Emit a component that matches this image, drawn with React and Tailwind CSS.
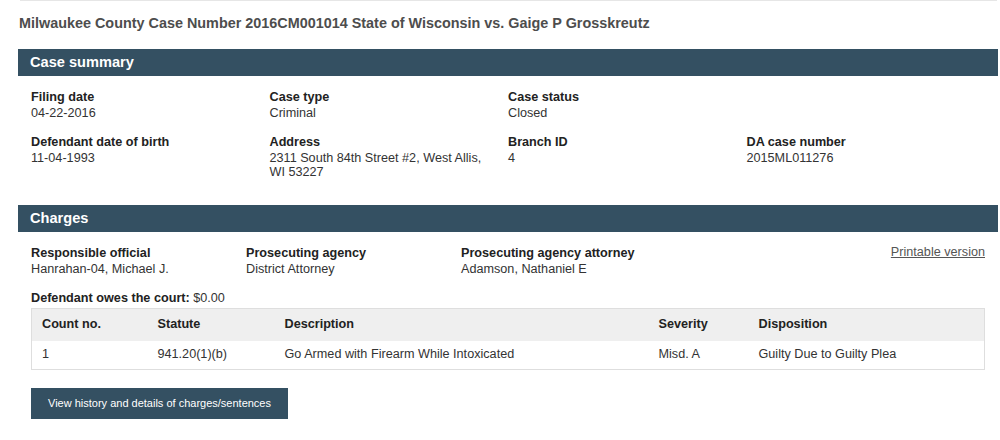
import React from "react";

const summaryRows = [
  [
    { label: "Filing date", value: "04-22-2016" },
    { label: "Case type", value: "Criminal" },
    { label: "Case status", value: "Closed" },
    null,
  ],
  [
    { label: "Defendant date of birth", value: "11-04-1993" },
    { label: "Address", value: ["2311 South 84th Street #2, West Allis,", "WI 53227"] },
    { label: "Branch ID", value: "4" },
    { label: "DA case number", value: "2015ML011276" },
  ],
];

const officials = [
  { label: "Responsible official", value: "Hanrahan-04, Michael J." },
  { label: "Prosecuting agency", value: "District Attorney" },
  { label: "Prosecuting agency attorney", value: "Adamson, Nathaniel E" },
];

const charges = [
  { count: "1", statute: "941.20(1)(b)", description: "Go Armed with Firearm While Intoxicated", severity: "Misd. A", disposition: "Guilty Due to Guilty Plea" },
];

function SectionBar({ title }) {
  return (
    <div className="h-[27px] bg-[#345062] flex items-center px-[12px]">
      <h2 className="text-white font-bold text-[14.6px] leading-none">{title}</h2>
    </div>
  );
}

function Field({ label, value }) {
  return (
    <div>
      <p className="font-bold text-[#222] leading-[14px] mb-[2px]">{label}</p>
      {Array.isArray(value) ? (
        value.map((line, i) => <p key={i} className="leading-[14px]">{line}</p>)
      ) : (
        <p className="leading-[14px]">{value}</p>
      )}
    </div>
  );
}

export default function App() {
  return (
    <div className="bg-white w-[1000px] h-[440px] overflow-hidden text-[12.65px] text-[#333] font-['Liberation_Sans',Arial,sans-serif]">
      <div className="pl-[18px] pr-[2px]">
        <div className="ml-[2px] mr-[1px] border-t border-[#e6e6e6]" />
        <h1 className="pt-[13px] pl-[1px] text-[14.4px] font-bold text-[#4d4d4d] leading-[18px] h-[48px]">
          Milwaukee County Case Number 2016CM001014 State of Wisconsin vs. Gaige P Grosskreutz
        </h1>

        {/* Case summary */}
        <SectionBar title="Case summary" />
        <div className="px-[13px] pt-[14px] pb-[26px] flex flex-col gap-[15px]">
          {summaryRows.map((row, r) => (
            <div key={r} className="grid grid-cols-4">
              {row.map((f, i) => (f ? <Field key={i} {...f} /> : <div key={i} />))}
            </div>
          ))}
        </div>

        {/* Charges */}
        <SectionBar title="Charges" />
        <div className="px-[13px] pt-[14px]">
          <div className="flex items-start">
            <div className="grid grid-cols-[215px_215px_1fr] flex-1">
              {officials.map((f, i) => <Field key={i} {...f} />)}
            </div>
            <a href="#" className="text-[#555] underline leading-[14px] -mt-[1px]">Printable version</a>
          </div>
          <p className="mt-[15px] leading-[14px]">
            <span className="font-bold text-[#222]">Defendant owes the court:</span> $0.00
          </p>
          <table className="mt-[3px] w-full border border-[#dedede] border-collapse table-fixed">
            <colgroup>
              <col className="w-[116px]" />
              <col className="w-[127px]" />
              <col className="w-[374px]" />
              <col className="w-[100px]" />
              <col />
            </colgroup>
            <thead>
              <tr className="bg-[#efefef] h-[32px] text-left">
                {["Count no.", "Statute", "Description", "Severity", "Disposition"].map((h) => (
                  <th key={h} className="pl-[10px] font-bold text-[#222]">{h}</th>
                ))}
              </tr>
            </thead>
            <tbody>
              {charges.map((c) => (
                <tr key={c.count} className="h-[29px]">
                  <td className="pl-[10px]">{c.count}</td>
                  <td className="pl-[10px]">{c.statute}</td>
                  <td className="pl-[10px]">{c.description}</td>
                  <td className="pl-[10px]">{c.severity}</td>
                  <td className="pl-[10px]">{c.disposition}</td>
                </tr>
              ))}
            </tbody>
          </table>
          <button className="mt-[18px] h-[31px] w-[257px] bg-[#345062] text-white text-[11px] text-center">
            View history and details of charges/sentences
          </button>
        </div>
      </div>
    </div>
  );
}
